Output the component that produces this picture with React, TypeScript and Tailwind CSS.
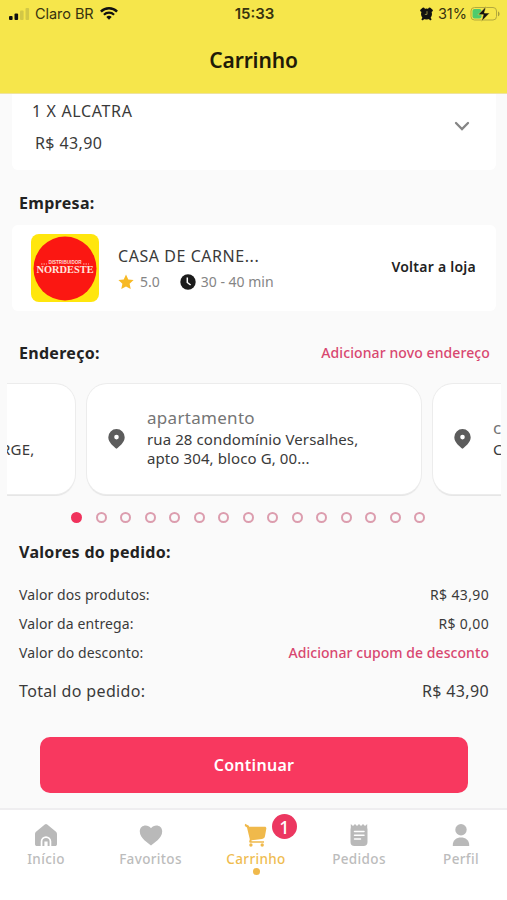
import * as React from 'react';
import { clsx } from 'clsx';

const ADDRESS_COUNT = 15;

const totals = [
  { label: 'Valor dos produtos:', value: 'R$ 43,90' },
  { label: 'Valor da entrega:', value: 'R$ 0,00' },
];

const PinIcon = () => (
  <svg width="17" height="20" viewBox="0 0 17 20" className="shrink-0">
    <path
      fill="#5c5c5c"
      fillRule="evenodd"
      d="M8.5 0A8.2 8.2 0 0 0 .3 8.2c0 5.3 5.5 9.2 8.2 11.6 2.7-2.4 8.2-6.3 8.2-11.6A8.2 8.2 0 0 0 8.5 0Zm0 5.8a2.3 2.3 0 1 1 0 4.6 2.3 2.3 0 0 1 0-4.6Z"
    />
  </svg>
);

const StatusBar = () => (
  <div className="grid h-[27px] grid-cols-3 items-center pl-2 pr-[6px] text-[15px] leading-5 text-[#37330f]">
    <div className="flex items-center">
      <svg width="22" height="14" viewBox="0 0 22 14" className="shrink-0">
        <rect x="1" y="9" width="3.6" height="4" rx="1" fill="#111" />
        <rect x="6.5" y="6.5" width="3.6" height="6.5" rx="1" fill="#111" />
        <rect x="12" y="3.5" width="3.6" height="9.5" rx="1" fill="#d2c746" />
        <rect x="17.5" y="1" width="3.6" height="12" rx="1" fill="#d2c746" />
      </svg>
      <span className="ml-[5px] whitespace-nowrap font-['Inter','Liberation_Sans',sans-serif] text-[14.5px] tracking-[-0.05px]">
        Claro BR
      </span>
      <svg width="18" height="13" viewBox="0 0 18 13" className="ml-[6px] shrink-0" fill="none" stroke="#111">
        <path d="M.9 4.6a11.7 11.7 0 0 1 16.2 0" strokeWidth="2.5" />
        <path d="M3.9 7.7a7.3 7.3 0 0 1 10.2 0" strokeWidth="2.2" />
        <path d="M6.3 10a4 4 0 0 1 5.4 0L9 12.8Z" fill="#111" stroke="none" />
      </svg>
    </div>
    <div className="text-center font-['Inter','Liberation_Sans',sans-serif] text-[15px] font-semibold">15:33</div>
    <div className="flex items-center justify-end">
      <svg width="13" height="14" viewBox="0 0 13 14" className="shrink-0">
        <path d="M1.5 3.5 3.5 1.8M11.5 3.5 9.5 1.8" stroke="#111" strokeWidth="2.6" strokeLinecap="round" />
        <circle cx="6.5" cy="7" r="5.5" fill="#111" />
        <path d="m2.5 12.3 1.5-2M10.5 12.3 9 10.3" stroke="#111" strokeWidth="2" strokeLinecap="round" />
        <path d="M7 4.2v3.2H4.8" stroke="#8d8643" strokeWidth="1" fill="none" />
      </svg>
      <span className="ml-[5px] font-['Inter','Liberation_Sans',sans-serif] text-[14.5px]">31%</span>
      <svg width="31" height="16" viewBox="0 0 31 16" className="ml-[3px] shrink-0">
        <rect x="1" y="1.5" width="25.5" height="12.5" rx="3.5" fill="none" stroke="#b4a93d" />
        <path d="M28 5.5c2 .6 2 4.2 0 4.8Z" fill="#a89e3a" />
        <rect x="2.5" y="3" width="9" height="9.5" rx="2" fill="#4fcb6c" />
        <path d="M16 .6 8 8.7h5.3L11.5 15.4l8.2-8.4h-5.3Z" fill="#111" stroke="#f6e64b" strokeWidth=".6" />
      </svg>
    </div>
  </div>
);

const SectionTitle: React.FC<{ children: React.ReactNode; className?: string }> = ({ children, className }) => (
  <h2 className={clsx('text-[16px] font-bold leading-6 tracking-[0.3px] text-[#222]', className)}>{children}</h2>
);

const StoreLogo = () => (
  <div className="relative flex size-[68px] shrink-0 flex-col items-center pt-[26px]">
    <svg width="68" height="68" viewBox="0 0 68 68" className="absolute inset-0">
      <rect width="68" height="68" rx="8" fill="#ffe60d" />
      <ellipse cx="34" cy="34.5" rx="31.5" ry="32" fill="#fb1712" />
      <path d="M10 30h6M52 30h6" stroke="#ffb0a5" strokeWidth="1" strokeDasharray="1.5 1" />
    </svg>
    <span className="relative font-['Liberation_Sans',sans-serif] text-[4.6px] font-bold leading-[6px] text-[#ffd9d2]">
      DISTRIBUIDOR
    </span>
    <span className="relative -mt-px font-['Liberation_Serif',serif] text-[10.4px] font-bold leading-[10px] text-[#ffe4de]">
      NORDESTE
    </span>
  </div>
);

const HomeIcon = () => (
  <svg width="24" height="24" viewBox="0 0 24 24">
    <path
      fill="#b9b9b9"
      d="M10.8 1.4a2 2 0 0 1 2.4 0l8.5 7.1c.9.8 1.3 1.7 1.3 2.9V21c0 1.4-.8 2-2 2h-3.7v-4.5a5.3 5.3 0 0 0-10.6 0V23H3c-1.2 0-2-.6-2-2v-9.6c0-1.2.4-2.100 1.300-2.900Z"
    />
    <path fill="#b9b9b9" d="M8.4 23v-4.300a3.600 3.600 0 0 1 7.200 0V23h-2v-4.500h-3.200V23Z" />
  </svg>
);

const HeartIcon = () => (
  <svg width="24" height="24" viewBox="0 0 24 24">
    <path
      fill="#b9b9b9"
      d="M12 22.5C9.4 20.5.8 15.2.8 8.6c0-6.6 7.8-7.9 11.2-3.3 3.4-4.6 11.2-3.3 11.2 3.3 0 6.6-8.6 11.9-11.2 13.9Z"
    />
  </svg>
);

const CartIcon = () => (
  <svg width="24" height="24" viewBox="0 0 24 24">
    <path
      fill="#f0b94b"
      d="M1 .8 4 2.2c.7.3 1 .8 1.2 1.5h15.5c1.2 0 1.8.8 1.6 2L21 13.1c-.3 1.8-1.2 2.6-3 2.9L7.5 17.2v1H20v1.6H6.3c-.8 0-1.2-.4-1.1-1.2l.6-2.4L3 4.5.8 3Z"
    />
    <circle cx="6.9" cy="22" r="1.7" fill="#f0b94b" />
    <circle cx="18.2" cy="22" r="1.7" fill="#f0b94b" />
  </svg>
);

const NotesIcon = () => (
  <svg width="24" height="24" viewBox="0 0 24 24">
    <path
      fill="#b9b9b9"
      d="M3.8 1 6 3l2-2 2 2 2-2 2 2 2-2 2 2 2.2-2v4.500h.3V19c0 2.600-1.400 4-4 4h-9c-2.600 0-4-1.400-4-4V5.500h.3Z"
    />
    <path d="M7.5 8.500h9.500M7.500 12.300h9.500M7.500 16h6" stroke="#fff" strokeWidth="1.5" strokeLinecap="round" />
  </svg>
);

const PersonIcon = () => (
  <svg width="24" height="24" viewBox="0 0 24 24">
    <circle cx="12" cy="6.8" r="5.7" fill="#b9b9b9" />
    <path fill="#b9b9b9" d="M3.8 23v-1c0-5 3.700-7.500 8.200-7.500s8.200 2.500 8.200 7.500v1Z" />
  </svg>
);

const tabs = [
  { label: 'Início', icon: HomeIcon, width: 'w-[92px]' },
  { label: 'Favoritos', icon: HeartIcon, width: 'w-[117px]' },
  { label: 'Carrinho', icon: CartIcon, width: 'w-[94px]', active: true },
  { label: 'Pedidos', icon: NotesIcon, width: 'w-[112px]' },
  { label: 'Perfil', icon: PersonIcon, width: 'w-[92px]' },
];

const TabBar = () => (
  <nav className="flex h-[92px] shrink-0 border-t-2 border-[#efeef0] bg-white pt-[13px]">
    {tabs.map(({ label, icon: Icon, width, active }) => (
      <div key={label} className={clsx('flex shrink-0 flex-col items-center', width)}>
        <div className="relative">
          <Icon />
          {active && (
            <span className="absolute -top-[9px] left-[28px] flex size-[25px] items-center justify-center rounded-full bg-[#ec3760] text-[18px] font-medium leading-none text-white">
              1
            </span>
          )}
        </div>
        <span
          className={clsx(
            'mt-[2px] whitespace-nowrap text-[13.5px] font-medium leading-5 tracking-[0.35px]',
            active ? 'text-[#efbc50]' : 'text-[#bcbcbc]'
          )}
        >
          {label}
        </span>
        {active && <span className="-mt-px size-[7px] rounded-full bg-[#f0b94b]" />}
      </div>
    ))}
  </nav>
);

export default function App() {
  return (
    <div className="flex h-[900px] w-[507px] flex-col overflow-hidden bg-[#fafafa] font-['Noto_Sans',sans-serif] text-[#3a3a3a]">
      <header className="h-[94px] shrink-0 border-b border-[#efe3a0] bg-[#f6e64b]">
        <StatusBar />
        <h1 className="pt-[17px] text-center text-[21px] font-semibold leading-8 tracking-[-0.15px] text-[#1f1b08]">
          Carrinho
        </h1>
      </header>

      <main className="flex-1">
        {/* Cart item */}
        <section className="ml-3 mr-[11px] flex h-[76px] justify-between rounded-b-md bg-white pl-5 pr-[26px]">
          <div>
            <p className="pt-[5px] text-[16px] leading-6 tracking-[0.65px]">1 X ALCATRA</p>
            <p className="pl-[3px] pt-2 text-[16px] leading-6 tracking-[0.4px]">R$ 43,90</p>
          </div>
          <svg width="16" height="11" viewBox="0 0 16 11" className="mt-[27px]">
            <path d="m2 2 6 6 6-6" fill="none" stroke="#858585" strokeWidth="2.3" strokeLinecap="round" />
          </svg>
        </section>

        <SectionTitle className="mt-[21px] pl-[19px]">Empresa:</SectionTitle>

        {/* Store */}
        <section className="ml-3 mr-[11px] mt-[10px] flex h-[86px] items-center rounded-md bg-white pl-[19px] pr-[20px]">
          <StoreLogo />
          <div className="ml-[19px] flex-1 pt-[2px]">
            <p className="text-[16px] leading-6 tracking-[0.55px]">CASA DE CARNE...</p>
            <div className="mt-[2px] flex items-center text-[14px] leading-6 text-[#858585]">
              <svg width="16" height="16" viewBox="0 0 24 24" fill="#f7b924">
                <path d="m12 .8 3.4 7.400 8 .9-6 5.500 1.700 8L12 18.600l-7.100 4 1.700-8-6-5.500 8-.9Z" />
              </svg>
              <span className="ml-[6px]">5.0</span>
              <svg width="16" height="16" viewBox="0 0 16 16" className="ml-5">
                <circle cx="8" cy="8" r="7.7" fill="#1b1b1b" />
                <path d="M7.3 3.5v5l3.3 2.500" fill="none" stroke="#fff" strokeWidth="1.5" />
              </svg>
              <span className="ml-[5px]">30 - 40 min</span>
            </div>
          </div>
          <button className="-mt-[3px] text-[14px] font-semibold tracking-[0.25px] text-[#222]">Voltar a loja</button>
        </section>

        <div className="mt-[30px] flex items-center justify-between pl-[19px] pr-[17px]">
          <SectionTitle>Endereço:</SectionTitle>
          <button className="-mt-[2px] text-[14px] font-medium tracking-[0.1px] text-[#d84770]">
            Adicionar novo endereço
          </button>
        </div>

        {/* Address carousel */}
        <div className="ml-[7px] mr-[6px] mt-4 flex h-[115px] gap-3 overflow-hidden pt-[3px]">
          <div className="h-[110px] w-[68px] shrink-0 overflow-hidden rounded-r-[20px] bg-white pt-[53px] shadow-[0_0_0_1px_#ececec,0_2px_1px_#e4e4e4]">
            <p className="-ml-[6px] whitespace-nowrap text-[15px] leading-6 tracking-[0.2px]">RGE,</p>
          </div>
          <div className="flex h-[110px] w-[334px] shrink-0 items-center rounded-[20px] bg-white pl-[21px] shadow-[0_0_0_1px_#ececec,0_2px_1px_#e4e4e4]">
            <PinIcon />
            <div className="-mt-1 ml-[22px] text-[15px] leading-[19px] tracking-[0.1px]">
              <p className="text-[17px] leading-6 tracking-[0.3px] text-[#757575]">apartamento</p>
              <p>rua 28 condomínio Versalhes,</p>
              <p>apto 304, bloco G, 00...</p>
            </div>
          </div>
          <div className="flex h-[110px] w-[334px] shrink-0 items-center rounded-[20px] bg-white pl-[21px] shadow-[0_0_0_1px_#ececec,0_2px_1px_#e4e4e4]">
            <PinIcon />
            <div className="-mt-[3px] ml-[22px] text-[15px] leading-[19px]">
              <p className="text-[17px] leading-6 text-[#757575]">casa</p>
              <p>Centro</p>
            </div>
          </div>
        </div>

        <div className="mt-4 flex justify-between pl-[71px] pr-[82px]">
          {Array.from({ length: ADDRESS_COUNT }, (_, i) => (
            <span
              key={i}
              className={clsx('size-[11px] rounded-full', i === 0 ? 'bg-[#f0325c]' : 'border-2 border-[#dc9dae]')}
            />
          ))}
        </div>

        {/* Totals */}
        <SectionTitle className="mt-[17px] pl-[19px]">Valores do pedido:</SectionTitle>
        <div className="mt-[19px] flex flex-col gap-[5px] pl-[19px] pr-[18px] text-[14px] leading-6 tracking-[0.1px]">
          {totals.map((row) => (
            <div key={row.label} className="flex justify-between">
              <span>{row.label}</span>
              <span className="tracking-[0.35px]">{row.value}</span>
            </div>
          ))}
          <div className="flex justify-between">
            <span>Valor do desconto:</span>
            <button className="font-medium tracking-[0.06px] text-[#d84770]">Adicionar cupom de desconto</button>
          </div>
          <div className="mt-[9px] flex justify-between text-[16px] tracking-[0.35px]">
            <span>Total do pedido:</span>
            <span>R$ 43,90</span>
          </div>
        </div>

        <button className="ml-10 mt-[34px] h-14 w-[428px] rounded-[10px] bg-[#f8385f] text-[16px] font-semibold tracking-[0.3px] text-white">
          Continuar
        </button>
      </main>

      <TabBar />
    </div>
  );
}
